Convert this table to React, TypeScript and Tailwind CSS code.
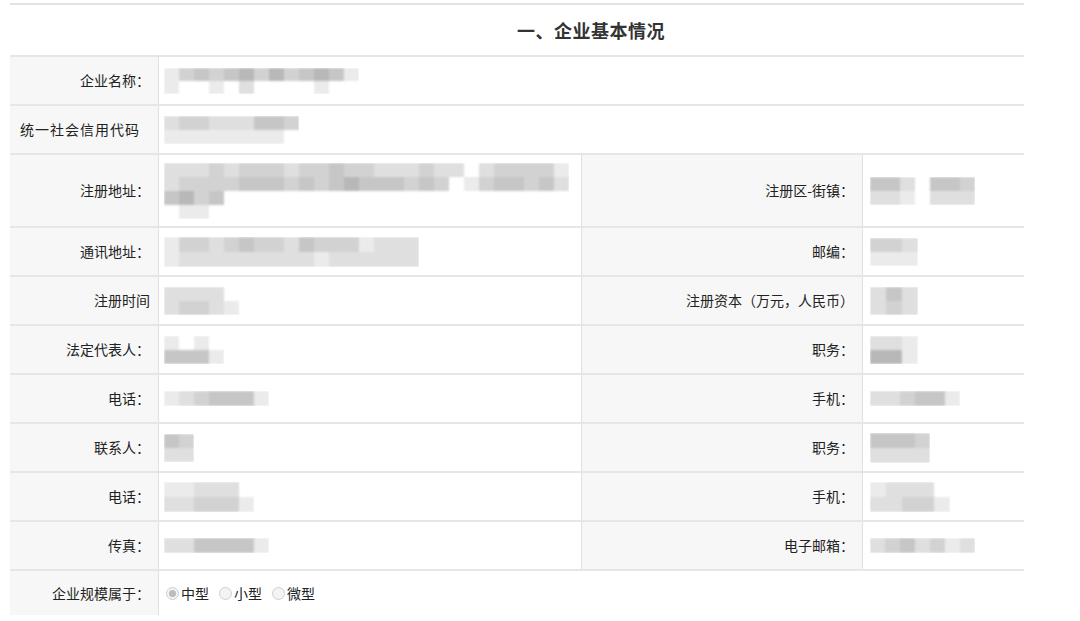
import { JSX } from "react";

// gray shades for the redacted (mosaic) values
const shades: Record<string, string> = {
  "1": "#ebebeb",
  "2": "#dfdfdf",
  "3": "#d2d2d2",
  "4": "#c6c6c6",
  "5": "#b8b8b8",
  "6": "#aaaaaa",
};

interface MosaicProps {
  rows: string[];
  bw?: number;
  bh?: number;
}

function Mosaic({ rows, bw = 15, bh = 14 }: MosaicProps): JSX.Element {
  const cols = Math.max(...rows.map((r) => r.length));
  const w = cols * bw;
  const h = rows.length * bh;
  return (
    <svg width={w} height={h} viewBox={`0 0 ${w} ${h}`} className="shrink-0">
      <defs>
        <filter id="soft" x="-10%" y="-10%" width="120%" height="120%">
          <feGaussianBlur stdDeviation="0.8" />
        </filter>
      </defs>
      <g filter="url(#soft)">
        {rows.map((row, ri) =>
          row.split("").map((c, ci) =>
            c === "0" ? null : (
              <rect
                key={`${ri}-${ci}`}
                x={ci * bw}
                y={ri * bh}
                width={bw}
                height={bh}
                fill={shades[c]}
              />
            )
          )
        )}
      </g>
    </svg>
  );
}

interface Cell {
  label: string;
  rows: string[];
  bw?: number;
  bh?: number;
}

const labelCls =
  "bg-[#f7f7f7] flex items-center justify-end pr-[8px] text-[14px] text-[#222] whitespace-nowrap overflow-hidden";
const valueCls = "bg-white flex items-center pl-[5px]";

function Radio({ checked, text }: { checked?: boolean; text: string }): JSX.Element {
  return (
    <label className="flex items-center gap-[2px] mr-[10px]">
      <span className="w-[13px] h-[13px] rounded-full border border-[#cfcfcf] bg-[#f3f3f3] flex items-center justify-center">
        {checked && <span className="w-[7px] h-[7px] rounded-full bg-[#bcbcbc]" />}
      </span>
      <span className="text-[14px] text-[#222]">{text}</span>
    </label>
  );
}

const pairRows: { left: Cell; right: Cell; tall?: boolean }[] = [
  {
    tall: true,
    left: {
      label: "注册地址：",
      rows: [
        "222323332334332223220233331",
        "233334443434544434301344342",
        "45340",
        "01100",
      ],
    },
    right: { label: "注册区-街镇：", rows: ["4420443", "2210222"] },
  },
  {
    left: { label: "通讯地址：", rows: ["13323433243331222", "12222222221222222"], bh: 15 },
    right: { label: "邮编：", rows: ["332", "111"], bw: 16 },
  },
  {
    left: { label: "注册时间", rows: ["222200", "233210"] },
    right: { label: "注册资本（万元，人民币）", rows: ["242", "232"], bw: 16 },
  },
  {
    left: { label: "法定代表人：", rows: ["1010", "4441"] },
    right: { label: "职务：", rows: ["221", "551"], bw: 16 },
  },
  {
    left: { label: "电话：", rows: ["1234441"], bh: 15 },
    right: { label: "手机：", rows: ["223441"], bh: 15 },
  },
  {
    left: { label: "联系人：", rows: ["43", "22"] },
    right: { label: "职务：", rows: ["4443", "2222"], bh: 15 },
  },
  {
    left: { label: "电话：", rows: ["112220", "223331"], bh: 15 },
    right: { label: "手机：", rows: ["12220", "22331"], bw: 16, bh: 15 },
  },
  {
    left: { label: "传真：", rows: ["2244441"], bh: 15 },
    right: { label: "电子邮箱：", rows: ["2342312"], bh: 15 },
  },
];

export default function App(): JSX.Element {
  return (
    <div
      className="w-[1080px] h-[621px] bg-white pt-[3px] pl-[10px]"
      style={{ fontFamily: '"Noto Sans CJK SC", "Noto Sans", sans-serif' }}
    >
      <div className="w-[1014px] border-t-2 border-[#e2e2e2]">
        {/* title */}
        <div className="grid grid-cols-[148px_866px] h-[50px]">
          <div />
          <div className="flex items-center justify-center font-bold text-[18px] text-[#333] tracking-[0.5px]">
            一、企业基本情况
          </div>
        </div>

        {/* full width rows */}
        <div className="grid grid-cols-[148px_866px] h-[49px] border-t-2 border-[#e6e6e6]">
          <div className={labelCls}>企业名称：</div>
          <div className={`${valueCls} border-l border-[#e0e0e0]`}>
            <Mosaic rows={["1343453534541", "1001020000100"]} bh={13} />
          </div>
        </div>
        <div className="grid grid-cols-[148px_866px] h-[49px] border-t-2 border-[#e6e6e6]">
          <div className={`${labelCls} justify-start pl-[10px] tracking-[1px]`}>统一社会信用代码</div>
          <div className={`${valueCls} border-l border-[#e0e0e0]`}>
            <Mosaic rows={["233222443", "111111110"]} />
          </div>
        </div>

        {/* two-column rows */}
        {pairRows.map((r, i) => (
          <div
            key={i}
            className={`grid grid-cols-[148px_423px_281px_162px] border-t-2 border-[#e6e6e6] ${
              r.tall ? "h-[73px]" : "h-[49px]"
            }`}
          >
            <div className={labelCls}>{r.left.label}</div>
            <div className={`${valueCls} border-l border-[#e0e0e0]`}>
              <Mosaic rows={r.left.rows} bw={r.left.bw} bh={r.left.bh} />
            </div>
            <div className={`${labelCls} border-l border-[#e0e0e0]`}>{r.right.label}</div>
            <div className={`${valueCls} border-l border-[#e0e0e0] pl-[7px]`}>
              <Mosaic rows={r.right.rows} bw={r.right.bw} bh={r.right.bh} />
            </div>
          </div>
        ))}

        {/* scale radio row */}
        <div className="grid grid-cols-[148px_866px] h-[46px] border-t-2 border-[#e6e6e6]">
          <div className={labelCls}>企业规模属于：</div>
          <div className={`${valueCls} border-l border-[#e0e0e0] pl-[7px]`}>
            <Radio checked text="中型" />
            <Radio text="小型" />
            <Radio text="微型" />
          </div>
        </div>
      </div>
    </div>
  );
}
